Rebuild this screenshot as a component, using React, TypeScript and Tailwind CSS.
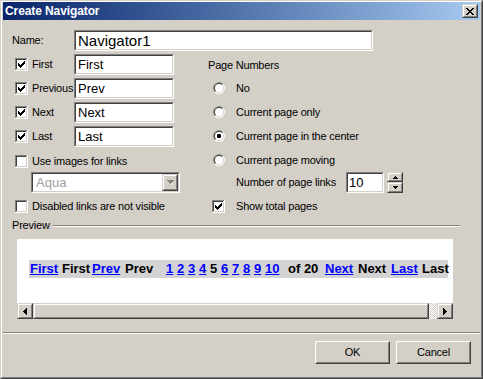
import React from "react";

const label = "text-[11px] leading-[13px] tracking-[-0.2px] text-black whitespace-nowrap";

function Check({ checked }: { checked?: boolean }) {
  return (
    <svg width="13" height="13" viewBox="0 0 13 13" shapeRendering="crispEdges" className="block shrink-0">
      <rect x="0" y="0" width="12" height="1" fill="#808080" />
      <rect x="0" y="0" width="1" height="12" fill="#808080" />
      <rect x="1" y="1" width="10" height="1" fill="#404040" />
      <rect x="1" y="1" width="1" height="10" fill="#404040" />
      <rect x="0" y="12" width="13" height="1" fill="#ffffff" />
      <rect x="12" y="0" width="1" height="13" fill="#ffffff" />
      <rect x="1" y="11" width="11" height="1" fill="#d4d0c8" />
      <rect x="11" y="1" width="1" height="11" fill="#d4d0c8" />
      <rect x="2" y="2" width="9" height="9" fill="#ffffff" />
      {checked && (
        <path
          d="M3 5h1v3H3z M4 6h1v3H4z M5 7h1v3H5z M6 6h1v3H6z M7 5h1v3H7z M8 4h1v3H8z M9 3h1v3H9z"
          fill="#000000"
        />
      )}
    </svg>
  );
}

function Radio({ checked }: { checked?: boolean }) {
  return (
    <svg width="12" height="12" viewBox="0 0 12 12" className="block shrink-0">
      <circle cx="6" cy="6" r="6" fill="#ffffff" />
      <path d="M1.757 10.243 A6 6 0 0 1 10.243 1.757 Z" fill="#808080" />
      <circle cx="6" cy="6" r="5" fill="#d4d0c8" />
      <path d="M2.464 9.536 A5 5 0 0 1 9.536 2.464 Z" fill="#404040" />
      <circle cx="6" cy="6" r="4" fill="#ffffff" />
      {checked && <rect x="4" y="4" width="4" height="4" rx="1.2" fill="#000000" />}
    </svg>
  );
}

function Sunken({ className, children }: { className?: string; children?: React.ReactNode }) {
  return (
    <div className={`border border-t-[#808080] border-l-[#808080] border-b-white border-r-white ${className ?? ""}`}>
      <div className="w-full h-full border border-t-[#404040] border-l-[#404040] border-b-[#d4d0c8] border-r-[#d4d0c8] bg-white flex items-center overflow-hidden">
        {children}
      </div>
    </div>
  );
}

function Raised({ className, children }: { className?: string; children?: React.ReactNode }) {
  return (
    <div className={`border border-t-[#d4d0c8] border-l-[#d4d0c8] border-b-[#404040] border-r-[#404040] bg-[#d4d0c8] shrink-0 ${className ?? ""}`}>
      <div className="w-full h-full border border-t-white border-l-white border-b-[#808080] border-r-[#808080] flex items-center justify-center">
        {children}
      </div>
    </div>
  );
}

function PushButton({ text }: { text: string }) {
  return (
    <div className="w-[75px] h-[23px] border border-t-white border-l-white border-b-[#404040] border-r-[#404040] bg-[#d4d0c8]">
      <div className="w-full h-full border border-t-[#d4d0c8] border-l-[#d4d0c8] border-b-[#808080] border-r-[#808080] flex items-center justify-center">
        <span className={label}>{text}</span>
      </div>
    </div>
  );
}

function TextField({ value, w }: { value: string; w: string }) {
  return (
    <Sunken className={`${w} h-[21px] shrink-0`}>
      <span className="pl-[2px] text-[13px] leading-[17px] text-black whitespace-nowrap">{value}</span>
    </Sunken>
  );
}

function CheckRow({ checked, text, value }: { checked: boolean; text: string; value: string }) {
  return (
    <div className="h-[21px] flex items-center">
      <Check checked={checked} />
      <span className={`${label} ml-[4px] w-[42px]`}>{text}</span>
      <TextField value={value} w="w-[100px]" />
    </div>
  );
}

function RadioRow({ checked, text }: { checked?: boolean; text: string }) {
  return (
    <div className="h-[24px] flex items-center pl-[5px]">
      <Radio checked={checked} />
      <span className={`${label} ml-[11px]`}>{text}</span>
    </div>
  );
}

const previewItems: { t: string; link: boolean; w: string }[] = [
  { t: "First", link: true, w: "w-[32px]" },
  { t: "First", link: false, w: "w-[30px]" },
  { t: "Prev", link: true, w: "w-[33px]" },
  { t: "Prev", link: false, w: "w-[41px]" },
  { t: "1", link: true, w: "w-[11px]" },
  { t: "2", link: true, w: "w-[11px]" },
  { t: "3", link: true, w: "w-[11px]" },
  { t: "4", link: true, w: "w-[11px]" },
  { t: "5", link: false, w: "w-[11px]" },
  { t: "6", link: true, w: "w-[11px]" },
  { t: "7", link: true, w: "w-[11px]" },
  { t: "8", link: true, w: "w-[11px]" },
  { t: "9", link: true, w: "w-[11px]" },
  { t: "10", link: true, w: "w-[23px]" },
  { t: "of 20", link: false, w: "w-[37px]" },
  { t: "Next", link: true, w: "w-[33px]" },
  { t: "Next", link: false, w: "w-[33px]" },
  { t: "Last", link: true, w: "w-[31px]" },
  { t: "Last", link: false, w: "w-[26px]" },
];

export default function App() {
  return (
    <div className="w-[483px] h-[379px] font-['Liberation_Sans',Arial,sans-serif] border border-t-[#d4d0c8] border-l-[#d4d0c8] border-b-[#404040] border-r-[#404040] bg-[#d4d0c8]">
      <div className="w-full h-full border border-t-white border-l-white border-b-[#808080] border-r-[#808080] px-[1px] pb-[1px] flex flex-col">
        {/* Title bar */}
        <div className="h-[18px] shrink-0 bg-gradient-to-r from-[#0a246a] to-[#a6caf0] flex items-center justify-between pl-[2px] pr-[2px]">
          <span className="text-white font-bold text-[12px] tracking-[-0.1px] leading-[14px]">Create Navigator</span>
          <Raised className="w-[16px] h-[14px]">
            <svg width="8" height="7" viewBox="0 0 8 7" shapeRendering="crispEdges" className="block">
              <path
                d="M0 0h2v1H0z M6 0h2v1H6z M1 1h2v1H1z M5 1h2v1H5z M2 2h4v1H2z M3 3h2v1H3z M2 4h4v1H2z M1 5h2v1H1z M5 5h2v1H5z M0 6h2v1H0z M6 6h2v1H6z"
                fill="#000"
              />
            </svg>
          </Raised>
        </div>

        {/* Name row */}
        <div className="mt-[10px] h-[21px] flex items-center pl-[9px]">
          <span className={`${label} w-[62px]`}>Name:</span>
          <Sunken className="w-[299px] h-[21px]">
            <span className="pl-[2px] text-[15px] leading-[17px] text-black whitespace-nowrap">Navigator1</span>
          </Sunken>
        </div>

        {/* Columns */}
        <div className="mt-[3px] flex pl-[12px]">
          <div className="w-[193px] flex flex-col">
            <div className="flex flex-col gap-[3px]">
              <CheckRow checked text="First" value="First" />
              <CheckRow checked text="Previous" value="Prev" />
              <CheckRow checked text="Next" value="Next" />
              <CheckRow checked text="Last" value="Last" />
            </div>
            <div className="mt-[8px] h-[13px] flex items-center">
              <Check />
              <span className={`${label} ml-[4px]`}>Use images for links</span>
            </div>
            <Sunken className="mt-[4px] ml-[16px] w-[149px] h-[21px]">
              <span className="flex-1 pl-[3px] text-[13px] leading-[17px] text-[#a0a0a0]">Aqua</span>
              <Raised className="w-[16px] h-full">
                <svg width="7" height="5" viewBox="0 0 7 5" shapeRendering="crispEdges" className="block">
                  <path d="M0 0h7v1H0z M1 1h5v1H1z M2 2h3v1H2z M3 3h1v1H3z" fill="#808080" />
                  <path d="M4 3h1v1H4z M4 4h1v1H4z" fill="#ffffff" />
                </svg>
              </Raised>
            </Sunken>
            <div className="mt-[7px] h-[13px] flex items-center">
              <Check />
              <span className={`${label} ml-[4px]`}>Disabled links are not visible</span>
            </div>
          </div>

          <div className="flex-1 flex flex-col">
            <div className="h-[22px] flex items-center">
              <span className={label}>Page Numbers</span>
            </div>
            <RadioRow text="No" />
            <RadioRow text="Current page only" />
            <RadioRow checked text="Current page in the center" />
            <RadioRow text="Current page moving" />
            <div className="h-[21px] flex items-center pl-[28px]">
              <span className={`${label} w-[110px]`}>Number of page links</span>
              <Sunken className="w-[38px] h-[21px] shrink-0">
                <span className="pl-[1px] text-[13px] leading-[17px] text-black">10</span>
              </Sunken>
              <div className="ml-[3px] w-[16px] h-[21px] flex flex-col">
                <Raised className="w-[16px] h-[10px]">
                  <svg width="5" height="3" viewBox="0 0 5 3" shapeRendering="crispEdges" className="block">
                    <path d="M2 0h1v1H2z M1 1h3v1H1z M0 2h5v1H0z" fill="#000" />
                  </svg>
                </Raised>
                <Raised className="w-[16px] h-[11px]">
                  <svg width="5" height="3" viewBox="0 0 5 3" shapeRendering="crispEdges" className="block">
                    <path d="M0 0h5v1H0z M1 1h3v1H1z M2 2h1v1H2z" fill="#000" />
                  </svg>
                </Raised>
              </div>
            </div>
            <div className="mt-[7px] h-[13px] flex items-center pl-[4px]">
              <Check checked />
              <span className={`${label} ml-[11px]`}>Show total pages</span>
            </div>
          </div>
        </div>

        {/* Preview header */}
        <div className="mt-[6px] h-[13px] flex items-center pl-[9px] pr-[20px]">
          <span className={label}>Preview</span>
          <div className="ml-[3px] flex-1 h-[2px] border-t border-t-[#808080] border-b border-b-white" />
        </div>

        {/* Preview box */}
        <div className="mt-[7px] ml-[14px] w-[436px] h-[80px] flex flex-col">
          <div className="h-[64px] bg-white pt-[17px] pl-[12px] overflow-hidden">
            <div className="inline-flex h-[18px] items-center bg-[#d3d3d3] pl-[1px] text-[13px] font-bold leading-[18px] text-black">
              {previewItems.map((it, i) => (
                <span key={i} className={`${it.w} shrink-0 whitespace-nowrap`}>
                  {it.link ? <span className="text-[#0000ff] underline">{it.t}</span> : it.t}
                </span>
              ))}
            </div>
          </div>
          <div className="h-[16px] flex">
            <Raised className="w-[16px] h-[16px]">
              <svg width="4" height="7" viewBox="0 0 4 7" shapeRendering="crispEdges" className="block">
                <path d="M0 3h1v1H0z M1 2h1v3H1z M2 1h1v5H2z M3 0h1v7H3z" fill="#000" />
              </svg>
            </Raised>
            <Raised className="w-[396px] h-[16px]" />
            <div className="w-[8px] h-[16px] bg-[repeating-conic-gradient(#ffffff_0_25%,#d4d0c8_0_50%)] bg-[length:2px_2px]" />
            <Raised className="w-[16px] h-[16px]">
              <svg width="4" height="7" viewBox="0 0 4 7" shapeRendering="crispEdges" className="block">
                <path d="M0 0h1v7H0z M1 1h1v5H1z M2 2h1v3H2z M3 3h1v1H3z" fill="#000" />
              </svg>
            </Raised>
          </div>
        </div>

        {/* Separator */}
        <div className="mt-[13px] h-[2px] border-t border-t-[#808080] border-b border-b-white" />

        {/* Buttons */}
        <div className="mt-[7px] flex justify-end gap-[6px] pr-[9px]">
          <PushButton text="OK" />
          <PushButton text="Cancel" />
        </div>
      </div>
    </div>
  );
}
